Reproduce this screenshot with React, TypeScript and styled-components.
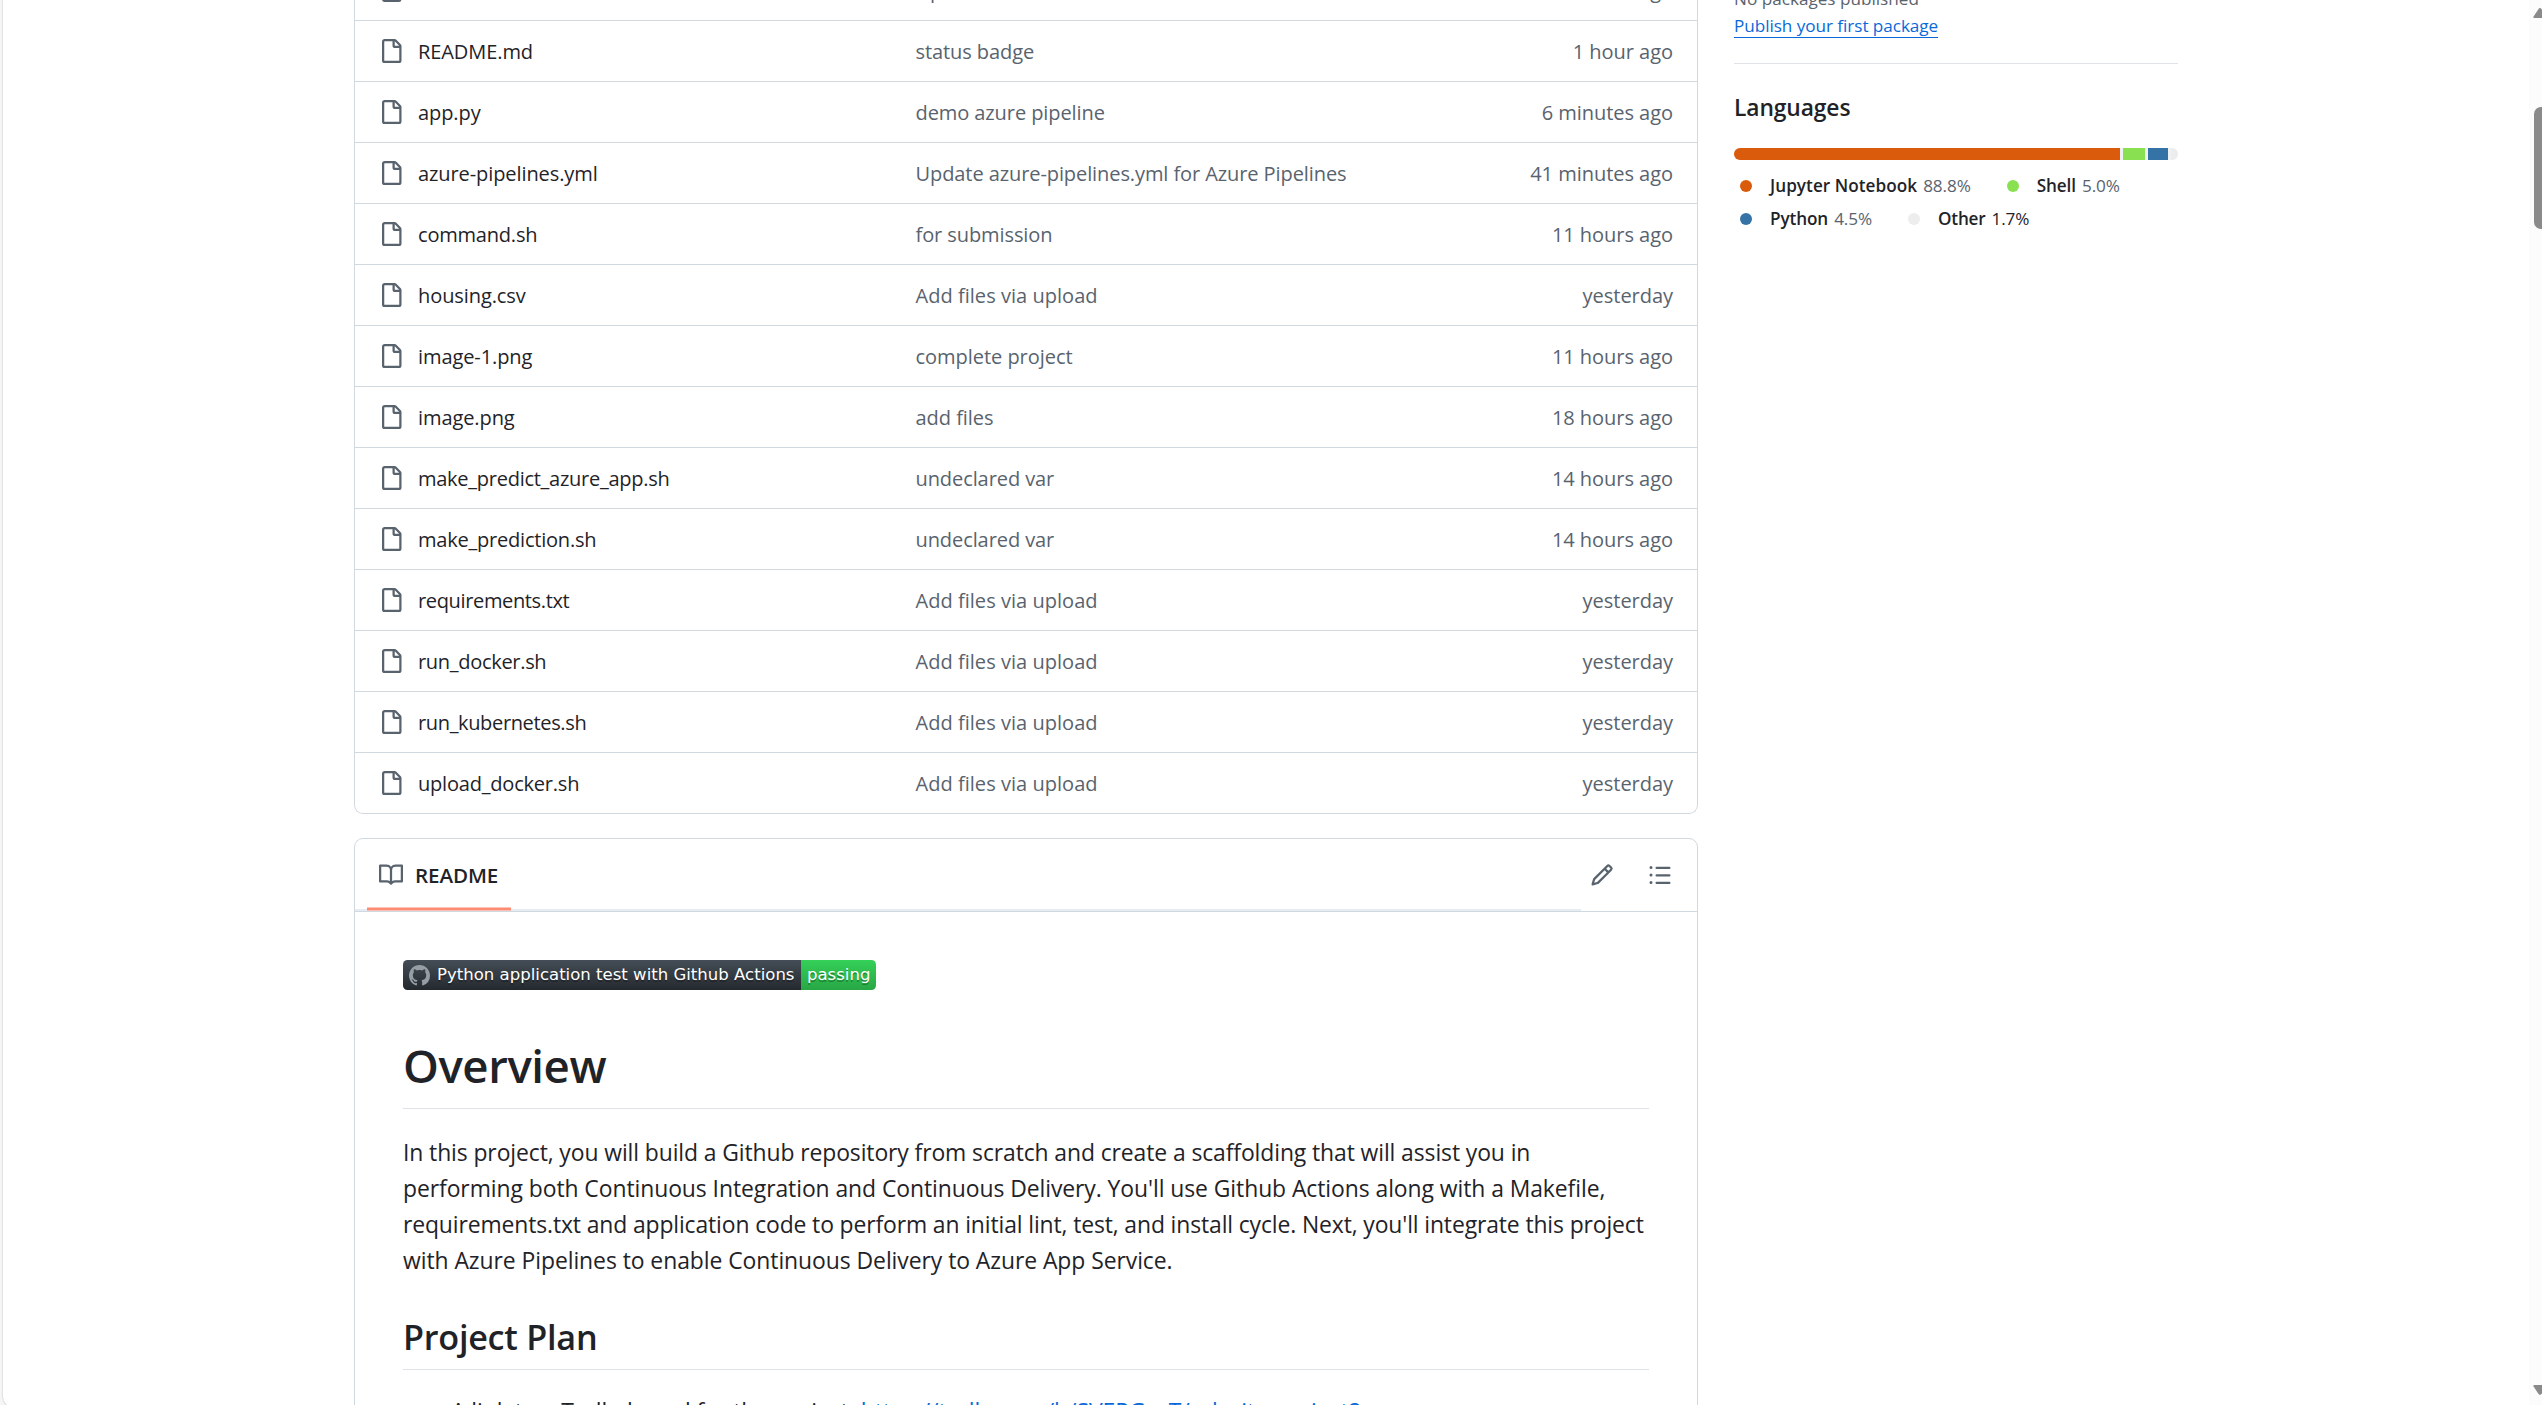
import React from 'react';
import styled, { createGlobalStyle } from 'styled-components';

const color = {
  text: '#1f2328',
  muted: '#59636e',
  link: '#0969da',
  border: '#d1d9e0',
  rule: '#dfe3e8',
};

const GlobalStyle = createGlobalStyle`
  *, *::before, *::after { box-sizing: border-box; }
  html, body { margin: 0; padding: 0; overflow: hidden; }
  body {
    background: #f6f6f6;
    color: ${color.text};
    font-family: 'Open Sans', 'Noto Sans', sans-serif;
    letter-spacing: -0.1px;
  }
  svg { display: block; flex: none; }
`;

const Frame = styled.div`
  display: flex;
  height: 1405px;
  padding-left: 3px;
  overflow: hidden;
`;

const Page = styled.main`
  display: grid;
  grid-template-columns: 1344px 444px;
  column-gap: 36px;
  align-content: start;
  width: 2526px;
  height: 1408px;
  flex: none;
  padding-left: 351px;
  background: #fff;
  border-bottom-left-radius: 12px;
  box-shadow: 0 0 2px rgba(0, 0, 0, 0.28);
`;

const Content = styled.div`
  display: flex;
  flex-direction: column;
  gap: 24px;
  height: 1405px;
  overflow: hidden;
`;

const FileTable = styled.div`
  flex: none;
  margin-top: -41px;
  border: 1px solid ${color.border};
  border-top: 0;
  border-radius: 0 0 9px 9px;
`;

const FileRow = styled.div`
  display: grid;
  grid-template-columns: 536.5px 1fr auto;
  align-items: center;
  height: 61px;
  padding: 0 24px;
  border-top: 1px solid ${color.border};
  font-size: 20.05px;
  line-height: 30px;
`;

const FileName = styled.span`
  display: flex;
  align-items: center;
  gap: 15px;
`;

const Cell = styled.span<{ $muted?: boolean; $tracking?: number }>`
  padding-top: 2px;
  color: ${(p) => (p.$muted ? color.muted : color.text)};
  letter-spacing: ${(p) => (p.$tracking ?? 0) - 0.1}px;
`;

const Note = styled.span`
  color: ${color.muted};
  letter-spacing: 0;
`;

const Glyph = styled.svg`
  width: 24px;
  height: 24px;
  fill: ${color.muted};
`;

const Readme = styled.section`
  flex: none;
  border: 1px solid ${color.border};
  border-radius: 9px;
`;

const ReadmeHeader = styled.header`
  display: flex;
  height: 73px;
  border-bottom: 1px solid ${color.border};
`;

const TabList = styled.nav`
  display: flex;
  width: 1226px;
  padding-left: 12px;
  box-shadow: inset 0 -2px 0 #e6ecf1;
`;

const Tab = styled.div`
  display: flex;
  align-items: center;
  gap: 12px;
  width: 144px;
  padding-left: 12px;
  font-size: 20.6px;
  font-weight: 600;
  background: linear-gradient(#fdc5b8 0 1px, #fd8c73 1px 3px, #fbc0b4 3px 4px) bottom / 100% 4px no-repeat;
`;

const HeaderActions = styled.div`
  display: flex;
  flex: 1;
  align-items: center;
  justify-content: flex-end;
  gap: 34px;
  padding-right: 25px;
`;

const Article = styled.article`
  padding: 48px;
`;

const Badge = styled.div`
  display: flex;
  width: 473px;
  height: 30px;
  border-radius: 4.5px;
  overflow: hidden;
  color: #fff;
  font-family: 'DejaVu Sans', sans-serif;
  font-size: 16.5px;
  letter-spacing: 0.02px;
  line-height: 30px;
  white-space: nowrap;
  text-shadow: 0 1.5px 0 rgba(1, 1, 1, 0.3);
`;

const BadgeLabel = styled.span`
  display: flex;
  align-items: center;
  gap: 7px;
  width: 398px;
  padding-left: 6px;
  background: linear-gradient(#444d56, #24292e);
`;

const BadgeStatus = styled.span`
  flex: 1;
  padding-left: 6px;
  background: linear-gradient(#34d058, #28a745);
`;

const BadgeMark = styled.svg`
  width: 21px;
  height: 21px;
  fill: #959da5;
`;

const Title = styled.h1`
  margin: 45px 0 26px;
  padding-bottom: 13px;
  border-bottom: 1px solid ${color.rule};
  font-size: 45.6px;
  font-weight: 600;
  line-height: 60px;
  letter-spacing: -0.45px;
`;

const Subtitle = styled.h2`
  margin: 35px 0 24px;
  padding-bottom: 10px;
  border-bottom: 1px solid ${color.rule};
  font-size: 34.2px;
  font-weight: 600;
  line-height: 45px;
  letter-spacing: -0.25px;
`;

const Paragraph = styled.p`
  display: grid;
  margin: 0;
  font-size: 22.92px;
  line-height: 36px;
  white-space: nowrap;
`;

const Line = styled.span<{ $tracking: number }>`
  letter-spacing: ${(p) => p.$tracking}px;
`;

const List = styled.ul`
  margin: 0;
  padding-left: 48px;
  font-size: 22.92px;
  line-height: 36px;
  letter-spacing: -0.04px;
  white-space: nowrap;
`;

const Link = styled.a`
  color: ${color.link};
  text-decoration: none;
`;

const Sidebar = styled.aside`
  display: flex;
  flex-direction: column;
  height: 1405px;
  margin-top: -15px;
  font-size: 17.15px;
  line-height: 27px;
`;

const Packages = styled.div`
  display: flex;
  flex-direction: column;
  height: 79px;
  border-bottom: 1px solid ${color.rule};
`;

const UnderlinedLink = styled(Link)`
  border-bottom: 1px solid ${color.link};
  letter-spacing: -0.05px;
`;

const SidebarHeading = styled.h2`
  margin: 26px 0 22px;
  font-size: 22.8px;
  font-weight: 600;
  line-height: 36px;
`;

const LanguageBar = styled.div`
  display: flex;
  gap: 3px;
  height: 12px;
  border-radius: 6px;
  overflow: hidden;
  background: #f0f1f2;
`;

const Segment = styled.span<{ $color: string; $width: number }>`
  width: ${(p) => p.$width}px;
  background: ${(p) => p.$color};
`;

const Legend = styled.div`
  display: grid;
  grid-auto-rows: 33px;
  margin-top: 9px;
`;

const LegendRow = styled.div`
  display: flex;
  align-items: center;
  gap: 36px;
  padding-left: 6px;
`;

const Language = styled.span`
  display: flex;
  align-items: center;
`;

const Dot = styled.span<{ $color: string }>`
  width: 12px;
  height: 12px;
  margin-right: 18px;
  border-radius: 50%;
  background: ${(p) => p.$color};
`;

const LanguageName = styled.strong<{ $tracking?: number }>`
  margin-right: 6px;
  font-weight: 600;
  letter-spacing: ${(p) => p.$tracking ?? -0.1}px;
`;

const Share = styled.span<{ $dark?: boolean }>`
  color: ${(p) => (p.$dark ? color.text : color.muted)};
`;

const Scrollbar = styled.div`
  display: flex;
  flex-direction: column;
  flex: none;
  width: 18px;
  height: 1405px;
  padding: 8px 0 10px 4px;
  background: #fcfcfc;
`;

const Thumb = styled.div`
  width: 14px;
  height: 122px;
  margin: 89px 0 auto 1px;
  border-radius: 7px;
  background: #8a8a8a;
`;

const ScrollArrow = styled.svg<{ $down?: boolean }>`
  width: 14px;
  height: 10px;
  fill: #8a8a8a;
  transform: ${(p) => (p.$down ? 'scaleY(-1)' : 'none')};
`;

type FileEntry = { name: string; message: string; age: string; nameTracking?: number; messageTracking?: number };

const files: FileEntry[] = [
  { name: 'Makefile', message: 'Update Makefile', age: '11 hours ago' },
  { name: 'README.md', message: 'status badge', age: '1 hour ago' },
  { name: 'app.py', message: 'demo azure pipeline', age: '6 minutes ago' },
  { name: 'azure-pipelines.yml', message: 'Update azure-pipelines.yml for Azure Pipelines', age: '41 minutes ago' },
  { name: 'command.sh', message: 'for submission', age: '11 hours ago', nameTracking: -0.12 },
  { name: 'housing.csv', message: 'Add files via upload', age: 'yesterday', messageTracking: 0.12 },
  { name: 'image-1.png', message: 'complete project', age: '11 hours ago', messageTracking: 0.05 },
  { name: 'image.png', message: 'add files', age: '18 hours ago', messageTracking: 0.05 },
  { name: 'make_predict_azure_app.sh', message: 'undeclared var', age: '14 hours ago', nameTracking: -0.18 },
  { name: 'make_prediction.sh', message: 'undeclared var', age: '14 hours ago', nameTracking: -0.13 },
  { name: 'requirements.txt', message: 'Add files via upload', age: 'yesterday', nameTracking: -0.27, messageTracking: 0.12 },
  { name: 'run_docker.sh', message: 'Add files via upload', age: 'yesterday', nameTracking: -0.22, messageTracking: 0.12 },
  { name: 'run_kubernetes.sh', message: 'Add files via upload', age: 'yesterday', nameTracking: -0.27, messageTracking: 0.12 },
  { name: 'upload_docker.sh', message: 'Add files via upload', age: 'yesterday', nameTracking: -0.12, messageTracking: 0.12 },
];

const languages = [
  { name: 'Jupyter Notebook', share: '88.8%', color: '#da5b0b', width: 386, tracking: 0.05 },
  { name: 'Shell', share: '5.0%', color: '#89e051', width: 22 },
  { name: 'Python', share: '4.5%', color: '#3572a5', width: 20 },
  { name: 'Other', share: '1.7%', color: '#ededed', width: 7, dark: true, tracking: -0.2 },
];

const paths = {
  file: 'M2 1.75C2 .784 2.784 0 3.75 0h6.586c.464 0 .909.184 1.237.513l2.914 2.914c.329.328.513.773.513 1.237v9.586A1.75 1.75 0 0 1 13.25 16h-9.5A1.75 1.75 0 0 1 2 14.25Zm1.75-.25a.25.25 0 0 0-.25.25v12.5c0 .138.112.25.25.25h9.5a.25.25 0 0 0 .25-.25V6h-2.75A1.75 1.75 0 0 1 9 4.25V1.5Zm6.75.062V4.25c0 .138.112.25.25.25h2.688l-.011-.013-2.914-2.914-.013-.011Z',
  book: 'M0 1.75A.75.75 0 0 1 .75 1h4.253c1.227 0 2.317.59 3 1.501A3.743 3.743 0 0 1 11.006 1h4.245a.75.75 0 0 1 .75.75v10.5a.75.75 0 0 1-.75.75h-4.507a2.25 2.25 0 0 0-1.591.659l-.622.621a.75.75 0 0 1-1.06 0l-.622-.621A2.25 2.25 0 0 0 5.258 13H.75a.75.75 0 0 1-.75-.75Zm7.251 10.324.004-5.073-.002-2.253A2.25 2.25 0 0 0 5.003 2.5H1.5v9h3.757a3.75 3.75 0 0 1 1.994.574ZM8.755 4.75l-.004 7.322a3.752 3.752 0 0 1 1.992-.572H14.5v-9h-3.495a2.25 2.25 0 0 0-2.25 2.25Z',
  pencil: 'M11.013 1.427a1.75 1.75 0 0 1 2.474 0l1.086 1.086a1.75 1.75 0 0 1 0 2.474l-8.61 8.61c-.21.21-.47.364-.756.445l-3.251.93a.75.75 0 0 1-.927-.928l.929-3.25c.081-.286.235-.547.445-.758l8.61-8.61Zm.176 4.823L9.75 4.81l-6.286 6.287a.253.253 0 0 0-.064.108l-.558 1.953 1.953-.558a.253.253 0 0 0 .108-.064Zm1.238-3.763a.25.25 0 0 0-.354 0L10.811 3.75l1.439 1.44 1.263-1.263a.25.25 0 0 0 0-.354Z',
  list: 'M5.75 2.5h8.5a.75.75 0 0 1 0 1.5h-8.5a.75.75 0 0 1 0-1.5Zm0 5h8.5a.75.75 0 0 1 0 1.5h-8.5a.75.75 0 0 1 0-1.5Zm0 5h8.5a.75.75 0 0 1 0 1.5h-8.5a.75.75 0 0 1 0-1.5ZM2 14a1 1 0 1 1 0-2 1 1 0 0 1 0 2Zm1-6a1 1 0 1 1-2 0 1 1 0 0 1 2 0ZM2 4a1 1 0 1 1 0-2 1 1 0 0 1 0 2Z',
  github: 'M8 0C3.58 0 0 3.58 0 8c0 3.54 2.29 6.53 5.47 7.59.4.07.55-.17.55-.38 0-.19-.01-.82-.01-1.49-2.01.37-2.53-.49-2.69-.94-.09-.23-.48-.94-.82-1.13-.28-.15-.68-.52-.01-.53.63-.01 1.08.58 1.23.82.72 1.21 1.87.87 2.33.66.07-.52.28-.87.51-1.07-1.78-.2-3.64-.89-3.64-3.95 0-.87.31-1.59.82-2.15-.08-.2-.36-1.02.08-2.12 0 0 .67-.21 2.2.82.64-.18 1.32-.27 2-.27s1.36.09 2 .27c1.53-1.04 2.2-.82 2.2-.82.44 1.1.16 1.92.08 2.12.51.56.82 1.27.82 2.15 0 3.07-1.87 3.75-3.65 3.95.29.25.54.73.54 1.48 0 1.07-.01 1.93-.01 2.2 0 .21.15.46.55.38A8.01 8.01 0 0 0 16 8c0-4.42-3.58-8-8-8Z',
};

const Icon = ({ name }: { name: keyof typeof paths }) => (
  <Glyph viewBox="0 0 16 16">
    <path d={paths[name]} />
  </Glyph>
);

const arrow = 'M1.5 10Q-.5 10 .7 8.2L5.4 1.2Q7 -1 8.6 1.2L13.3 8.2Q14.5 10 12.5 10Z';

export default function App() {
  return (
    <>
      <GlobalStyle />
      <Frame>
        <Page>
          <Content>
            <FileTable>
              {files.map((f) => (
                <FileRow key={f.name}>
                  <FileName>
                    <Icon name="file" />
                    <Cell $tracking={f.nameTracking}>{f.name}</Cell>
                  </FileName>
                  <Cell $muted $tracking={f.messageTracking}>
                    {f.message}
                  </Cell>
                  <Cell $muted $tracking={0.05}>
                    {f.age}
                  </Cell>
                </FileRow>
              ))}
            </FileTable>

            <Readme>
              <ReadmeHeader>
                <TabList>
                  <Tab>
                    <Icon name="book" />
                    README
                  </Tab>
                </TabList>
                <HeaderActions>
                  <Icon name="pencil" />
                  <Icon name="list" />
                </HeaderActions>
              </ReadmeHeader>
              <Article>
                <Badge>
                  <BadgeLabel>
                    <BadgeMark viewBox="0 0 16 16">
                      <path d={paths.github} />
                    </BadgeMark>
                    Python application test with Github Actions
                  </BadgeLabel>
                  <BadgeStatus>passing</BadgeStatus>
                </Badge>
                <Title>Overview</Title>
                <Paragraph>
                  <Line $tracking={-0.1}>
                    In this project, you will build a Github repository from scratch and create a scaffolding that will assist you in
                  </Line>
                  <Line $tracking={-0.07}>
                    performing both Continuous Integration and Continuous Delivery. You'll use Github Actions along with a Makefile,
                  </Line>
                  <Line $tracking={-0.125}>
                    requirements.txt and application code to perform an initial lint, test, and install cycle. Next, you'll integrate this project
                  </Line>
                  <Line $tracking={-0.06}>with Azure Pipelines to enable Continuous Delivery to Azure App Service.</Line>
                </Paragraph>
                <Subtitle>Project Plan</Subtitle>
                <List>
                  <li>
                    A link to a Trello board for the project: <Link>https://trello.com/b/SVEPGorT/udacity-project2</Link>
                  </li>
                </List>
              </Article>
            </Readme>
          </Content>

          <Sidebar>
            <Packages>
              <Note>No packages published</Note>
              <div>
                <UnderlinedLink>Publish your first package</UnderlinedLink>
              </div>
            </Packages>
            <SidebarHeading>Languages</SidebarHeading>
            <LanguageBar>
              {languages.map((l) => (
                <Segment key={l.name} $color={l.color} $width={l.width} />
              ))}
            </LanguageBar>
            <Legend>
              {[languages.slice(0, 2), languages.slice(2)].map((row, i) => (
                <LegendRow key={i}>
                  {row.map((l) => (
                    <Language key={l.name}>
                      <Dot $color={l.color} />
                      <LanguageName $tracking={l.tracking}>{l.name}</LanguageName>
                      <Share $dark={l.dark}>{l.share}</Share>
                    </Language>
                  ))}
                </LegendRow>
              ))}
            </Legend>
          </Sidebar>
        </Page>
        <Scrollbar>
          <ScrollArrow viewBox="0 0 14 10">
            <path d={arrow} />
          </ScrollArrow>
          <Thumb />
          <ScrollArrow viewBox="0 0 14 10" $down>
            <path d={arrow} />
          </ScrollArrow>
        </Scrollbar>
      </Frame>
    </>
  );
}
